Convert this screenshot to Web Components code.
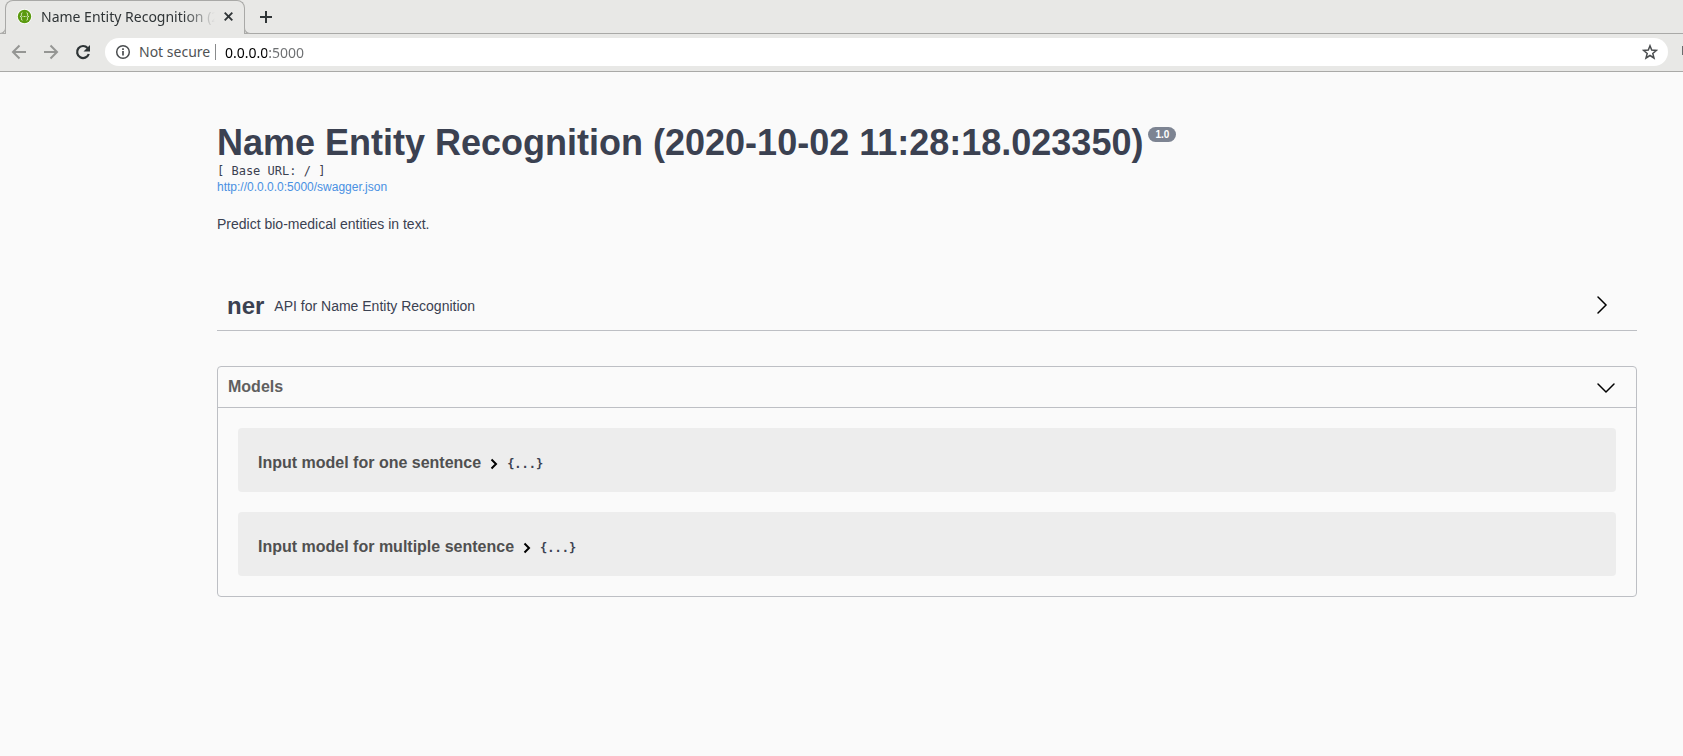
<!DOCTYPE html>
<html lang="en">
<head>
<meta charset="utf-8">
<title>Name Entity Recognition (2020-10-02 11:28:18.023350)</title>
<style>
  html, body { margin: 0; background: #fafafa; }
  body { font-family: "Liberation Sans", Arial, sans-serif; color: #3b4151; overflow-x: hidden; }
</style>
</head>
<body>
<browser-chrome>
  <browser-tab slot="tabs">Name Entity Recognition (2020-10-02 11:28:18.023350)</browser-tab>
  <address-bar slot="address" value="0.0.0.0:5000"></address-bar>
</browser-chrome>
<api-page>
  <api-info slot="info" version="1.0" href="http://0.0.0.0:5000/swagger.json">
    <span slot="title">Name Entity Recognition (2020-10-02 11:28:18.023350)</span>
    <span slot="base">[ Base URL: / ]</span>
    <span slot="description">Predict bio-medical entities in text.</span>
  </api-info>
  <api-tag name="ner">API for Name Entity Recognition</api-tag>
  <model-list>
    <model-box>Input model for one sentence</model-box>
    <model-box>Input model for multiple sentence</model-box>
  </model-list>
</api-page>

<script>
const define = (name, html, setup) => {
  customElements.define(name, class extends HTMLElement {
    constructor() {
      super();
      this.attachShadow({ mode: "open" }).innerHTML = html;
    }
    connectedCallback() {
      if (setup) setup(this, this.shadowRoot);
    }
  });
};

define("browser-chrome", `
  <style>
    :host { display: block; background: #e8e8e6; border-bottom: 1px solid #a9a9a7;
      font-family: "Noto Sans", "Open Sans", sans-serif; font-size: 14px; color: #303537; }
    button { border: 0; background: none; padding: 0; display: flex; cursor: pointer; }
    .strip { display: flex; height: 33px; padding-left: 5px; border-bottom: 1px solid #a9a9a7; }
    .add { width: 42px; align-items: center; justify-content: center; }
    .bar { display: flex; align-items: center; height: 36px; padding: 0 0 1px 8px; overflow: hidden; }
    .bar button { width: 32px; height: 32px; flex: none; align-items: center; justify-content: center; padding-right: 10px; }
    slot[name=address] { display: block; flex: 1; min-width: 0; margin-left: 1px; }
    .edge { flex: none; width: 1px; height: 9px; background: #6b6d6e; margin: 0 0 3px 14px; }
  </style>
  <div class="strip">
    <slot name="tabs"></slot>
    <button class="add" aria-label="New tab"><svg width="12" height="12" viewBox="0 0 12 12"><path d="M6 0v12M0 6h12" stroke="#303537" stroke-width="2"/></svg></button>
  </div>
  <div class="bar">
    <button aria-label="Back"><svg width="22" height="22" viewBox="0 0 22 22" fill="none" stroke="#959694" stroke-width="2"><path d="M18 11H5M11.500 4.500L5 11l6.500 6.500"/></svg></button>
    <button aria-label="Forward"><svg width="22" height="22" viewBox="0 0 22 22" fill="none" stroke="#959694" stroke-width="2"><path d="M4 11h13M10.500 4.500L17 11l-6.500 6.500"/></svg></button>
    <button aria-label="Reload"><svg width="22" height="22" viewBox="0 0 22 22"><path d="M15.600 7A6 6 0 1 0 16.800 13" fill="none" stroke="#2e3436" stroke-width="2.200"/><path d="M18 4v6.500h-6.500z" fill="#2e3436"/></svg></button>
    <slot name="address"></slot>
    <span class="edge"></span>
  </div>
`);

define("browser-tab", `
  <style>
    :host { position: relative; box-sizing: border-box; display: flex; align-items: center; width: 240px; height: 34px;
      padding: 0 7px 2px 11px; background: #e8e8e6; border: 1px solid #a9a9a7; border-bottom: 0; border-radius: 8px 8px 0 0; }
    :host::before, :host::after { content: ""; position: absolute; bottom: 0; width: 6px; height: 7px;
      box-sizing: border-box; border-bottom: 1px solid #a9a9a7; background: #e8e8e6; }
    :host::before { right: 100%; border-right: 1px solid #a9a9a7; border-bottom-right-radius: 6px; }
    :host::after { left: 100%; border-left: 1px solid #a9a9a7; border-bottom-left-radius: 6px; }
    .title { flex: 1; min-width: 0; margin: 0 5px 0 9px; line-height: 20px; overflow: hidden; white-space: nowrap;
      -webkit-mask-image: linear-gradient(to right, #000 82%, transparent 100%); mask-image: linear-gradient(to right, #000 82%, transparent 100%); }
    button { border: 0; background: none; display: flex; padding: 4px; }
    svg { flex: none; }
  </style>
  <svg width="15" height="15" viewBox="0 0 15 15"><circle cx="7.500" cy="7.500" r="7.500" fill="#fff"/><circle cx="7.500" cy="7.500" r="6.700" fill="#5b9a10"/>
    <path d="M5.500 3.800C3.900 3.800 4.600 5.300 4.400 6.500C4.300 7.200 4 7.500 3.300 7.500C4 7.500 4.300 7.800 4.400 8.500C4.600 9.700 3.900 11.200 5.500 11.200M9.500 3.800C11.100 3.800 10.400 5.300 10.600 6.500C10.700 7.200 11 7.500 11.700 7.500C11 7.500 10.700 7.800 10.600 8.500C10.400 9.700 11.100 11.200 9.500 11.200" fill="none" stroke="#e4f0d4"/><path d="M5.500 7.500h4" stroke="#d5e8bc" stroke-dasharray="1 .5"/></svg>
  <span class="title"><slot></slot></span>
  <button aria-label="Close tab"><svg width="9" height="9" viewBox="0 0 9 9"><path d="M.7.700l7.600 7.600M8.300.700L.7 8.300" stroke="#303537" stroke-width="1.900"/></svg></button>
`);

define("address-bar", `
  <style>
    :host { display: flex; align-items: center; height: 28px; padding: 0 10px; border-radius: 14px; background: #fff; }
    label { flex: none; width: 69px; margin: 0 7px 0 8px; color: #4f5254; line-height: 20px; white-space: nowrap; }
    .rule { width: 1px; height: 16px; background: #898b8c; margin-right: 9px; }
    input { flex: 1; min-width: 0; border: 0; outline: 0; padding: 0; margin: 0; height: 20px; font: inherit;
      color: transparent; caret-color: #000;
      background: linear-gradient(to right, #000 42px, #6c6e70 42px); -webkit-background-clip: text; background-clip: text; }
    button { border: 0; background: none; padding: 0; display: flex; }
    svg { flex: none; }
  </style>
  <svg width="16" height="16" viewBox="0 0 16 16"><circle cx="8" cy="8" r="6.300" fill="none" stroke="#4a4d4f" stroke-width="1.500"/><path d="M8 7v4.500M8 4.300v1.700" stroke="#4a4d4f" stroke-width="1.700"/></svg>
  <label for="url">Not secure</label><span class="rule"></span>
  <input id="url" type="text" spellcheck="false">
  <button aria-label="Bookmark this page"><svg width="16" height="16" viewBox="0 0 16 16"><path d="M8 1.800l1.700 4.300 4.700.3-3.600 3 1.200 4.600L8 11.500 4 14l1.200-4.600-3.600-3 4.700-.3z" fill="none" stroke="#4a4d4f" stroke-width="1.500"/></svg></button>
`, (el, root) => { root.getElementById("url").value = el.getAttribute("value"); });

define("api-page", `
  <style>
    :host { display: block; max-width: 1420px; padding: 50px 46px 50px 217px; }
    @media (max-width: 1000px) { :host { padding-left: 20px; padding-right: 20px; } }
  </style>
  <slot name="info"></slot>
  <slot></slot>
`);

define("api-info", `
  <style>
    :host { display: block; }
    h2 { margin: 0; font-size: 36px; line-height: 41px; font-weight: 700; }
    .version { display: inline-block; vertical-align: 17px; margin-left: 5px; padding: 2px 7px; border-radius: 8px;
      background: #7d8492; color: #fff; font-size: 10px; line-height: 11px; }
    pre { margin: 0; font: 400 12px/16px "DejaVu Sans Mono", monospace; }
    a { display: block; width: fit-content; font-size: 12px; line-height: 17px; color: #4990e2; text-decoration: none; }
    p { margin: 20px 0 0; font-size: 14px; line-height: 16px; }
  </style>
  <h2><slot name="title"></slot><span class="version"></span></h2>
  <pre><slot name="base"></slot></pre>
  <a></a>
  <p><slot name="description"></slot></p>
`, (el, root) => {
  root.querySelector(".version").textContent = el.getAttribute("version");
  const link = root.querySelector("a");
  link.href = link.textContent = el.getAttribute("href");
});

define("api-tag", `
  <style>
    :host { display: flex; align-items: center; margin-top: 50px; padding: 10px 20px 10px 10px; border-bottom: 1px solid #bdbfc4; }
    h3 { margin: 0; font-size: 24px; line-height: 28px; }
    p { flex: 1; margin: 0 10px; font-size: 14px; line-height: 16px; }
    button { border: 0; background: none; padding: 0 7px 3px; display: flex; }
  </style>
  <h3></h3><p><slot></slot></p>
  <button aria-label="Expand"><svg width="15" height="20" viewBox="0 0 15 20"><path d="M3 2l8 8-8 8" fill="none" stroke="#000" stroke-width="1.500" stroke-linecap="round"/></svg></button>
`, (el, root) => { root.querySelector("h3").textContent = el.getAttribute("name"); });

define("model-list", `
  <style>
    :host { display: block; margin-top: 35px; border: 1px solid #bdbfc4; border-radius: 4px; }
    header { display: flex; align-items: center; justify-content: space-between; padding: 10px 20px 10px 10px; border-bottom: 1px solid #bdbfc4; }
    h3 { margin: 0; font-size: 16px; line-height: 20px; color: #606060; }
    button { border: 0; background: none; padding: 0; display: flex; }
    .models { display: flex; flex-direction: column; gap: 20px; padding: 20px; }
  </style>
  <header><h3>Models</h3><button aria-label="Collapse"><svg width="20" height="20" viewBox="0 0 20 20"><path d="M2 7l8 8 8-8" fill="none" stroke="#000" stroke-width="1.500" stroke-linecap="round"/></svg></button></header>
  <div class="models"><slot></slot></div>
`);

define("model-box", `
  <style>
    :host { display: block; padding: 25px 20px 19px; border-radius: 4px; background: #ededed; }
    button { border: 0; background: none; padding: 0; display: flex; align-items: center; height: 20px; color: #3b4151; }
    .name { font: 700 16px/20px "Liberation Sans", Arial, sans-serif; color: #505050; }
    svg { margin: 2px 8px 0 8px; }
    .body { margin-top: 2px; font: 700 12px/16px "DejaVu Sans Mono", monospace; }
  </style>
  <button aria-expanded="false"><span class="name"><slot></slot></span><svg width="10" height="12" viewBox="0 0 10 12"><path d="M2.500 1.500L7 6l-4.500 4.500" fill="none" stroke="#000" stroke-width="2"/></svg><span class="body">{...}</span></button>
`);
</script>
</body>
</html>
